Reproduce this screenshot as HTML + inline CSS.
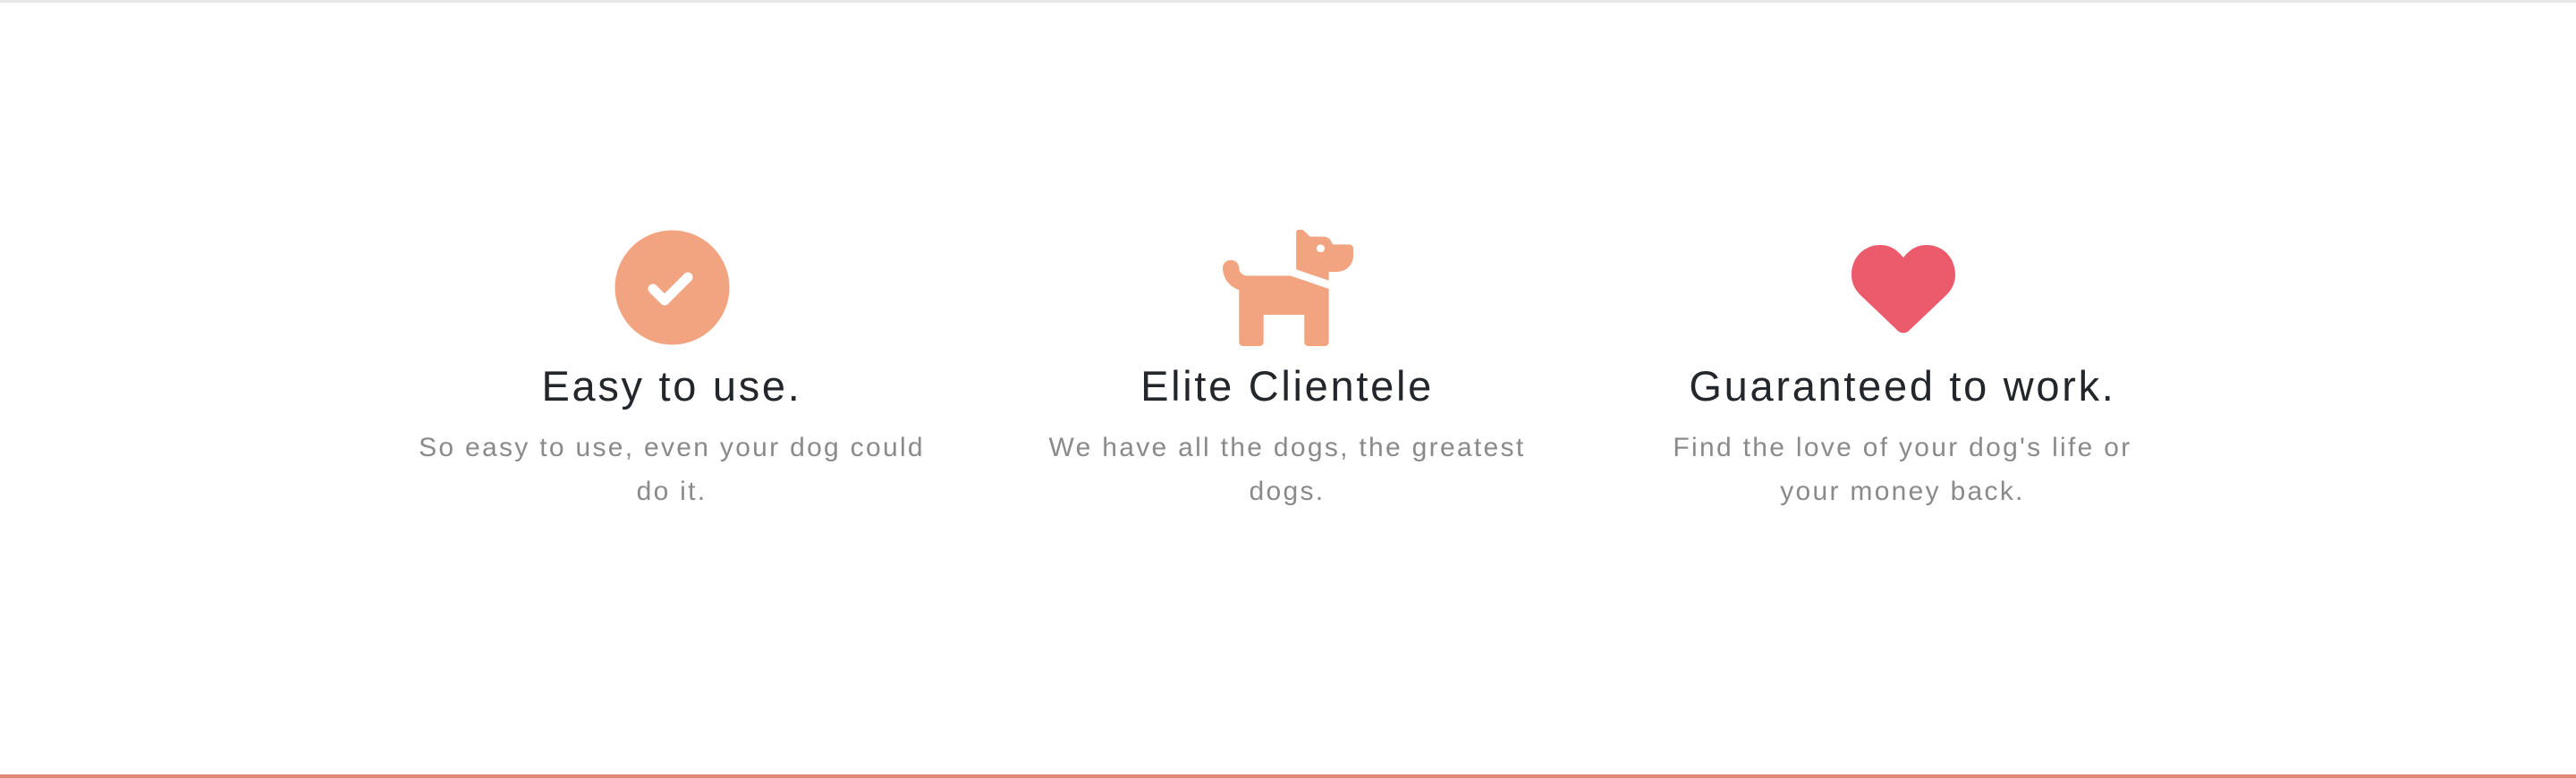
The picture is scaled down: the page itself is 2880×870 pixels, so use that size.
<!DOCTYPE html>
<html><head><meta charset="utf-8"><style>
html,body{margin:0;padding:0;background:#fff;}
body{width:2880px;height:870px;position:relative;overflow:hidden;font-family:"Liberation Sans",sans-serif;}
.top{position:absolute;left:0;top:0;width:2880px;height:3px;background:#e6e6e6;}
.bot{position:absolute;left:0;top:866px;width:2880px;height:4px;background:#e08878;}
.col{position:absolute;top:0;width:600px;text-align:center;}
.col svg{position:absolute;}
h3{position:absolute;left:-100px;width:800px;top:402px;margin:0;font-weight:400;font-size:47px;letter-spacing:2.7px;color:#23262b;line-height:60px;white-space:nowrap;}
p{position:absolute;left:-100px;width:800px;top:476px;margin:0;font-size:30px;letter-spacing:2.3px;line-height:49px;color:#8a8a8a;white-space:nowrap;}
</style></head><body>
<div class="top"></div>
<div class="col" style="left:451px">
<svg style="left:236px;top:257px" width="129" height="129" viewBox="0 0 129 129"><circle cx="64.5" cy="64.5" r="64" fill="#f2a481"/><polyline points="43,66 56,79 82,53" fill="none" stroke="#fff" stroke-width="11" stroke-linecap="round" stroke-linejoin="round"/></svg>
<h3>Easy to use.</h3>
<p>So easy to use, even your dog could<br>do it.</p>
</div>
<div class="col" style="left:1139px">
<svg style="left:228px;top:257px" width="146" height="130" viewBox="32 36 512 476" preserveAspectRatio="none"><path fill="#f2a481" d="M298.06,224,448,277.55V496a16,16,0,0,1-16,16H368a16,16,0,0,1-16-16V384H192V496a16,16,0,0,1-16,16H112a16,16,0,0,1-16-16V282.09C58.84,268.84,32,233.66,32,192a32,32,0,0,1,64,0,32.06,32.06,0,0,0,32,32ZM544,112v32a64,64,0,0,1-64,64H448v35.58L320,197.870V48c0-14.25,17.22-21.39,27.31-11.31L374.59,64h53.63c10.91,0,23.75,7.92,28.62,17.690L464,96h64A16,16,0,0,1,544,112Zm-112,0a16,16,0,1,0-16,16A16,16,0,0,0,432,112Z"/></svg>
<h3>Elite Clientele</h3>
<p>We have all the dogs, the greatest<br>dogs.</p>
</div>
<div class="col" style="left:1827px">
<svg style="left:243px;top:274px" width="116" height="100" viewBox="0 0 116 100"><path fill="#ec5b6b" d="M58,14 C50,4 42,0 32,0 C14,0 0,14 0,33 C0,43 4,50 10,56 L52,96 C55,99 61,99 64,96 L106,56 C112,50 116,43 116,33 C116,14 102,0 84,0 C74,0 66,4 58,14Z"/></svg>
<h3>Guaranteed to work.</h3>
<p>Find the love of your dog's life or<br>your money back.</p>
</div>
<div class="bot"></div>
</body></html>
